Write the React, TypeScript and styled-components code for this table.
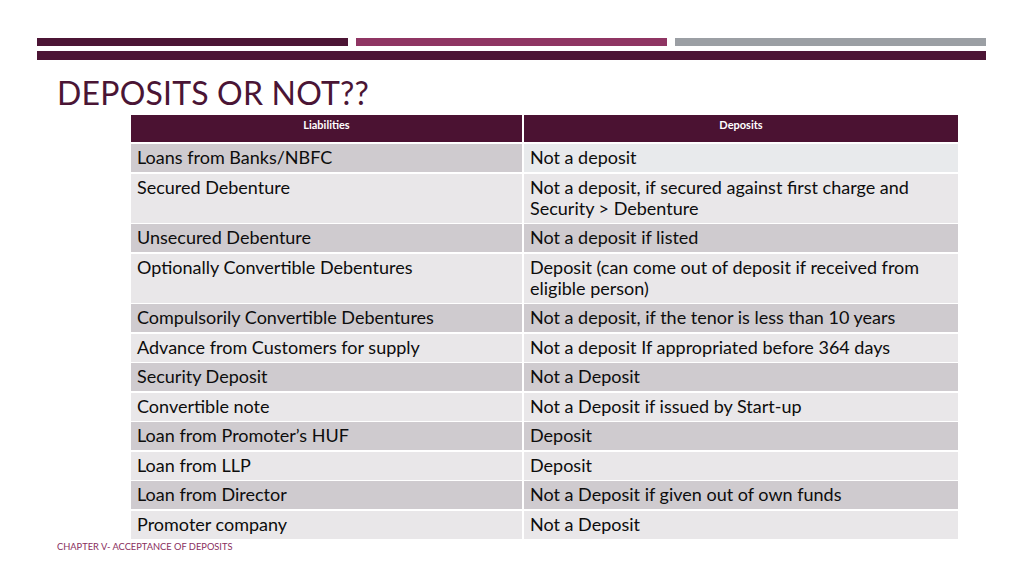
import React from "react";
import styled, {createGlobalStyle} from "styled-components";

const GlobalStyle = createGlobalStyle`
  html, body {
    margin: 0;
    padding: 0;
    background: #ffffff;
  }
  body {
    font-family: Lato, "Open Sans", sans-serif;
  }
`

interface IRow {
    liability: string
    deposit: string
}

const rows: IRow[] = [
    {liability: 'Loans from Banks/NBFC', deposit: 'Not a deposit'},
    {liability: 'Secured Debenture', deposit: 'Not a deposit, if secured against first charge and Security > Debenture'},
    {liability: 'Unsecured Debenture', deposit: 'Not a deposit if listed'},
    {liability: 'Optionally Convertible Debentures', deposit: 'Deposit (can come out of deposit if received from eligible person)'},
    {liability: 'Compulsorily Convertible Debentures', deposit: 'Not a deposit, if the tenor is less than 10 years'},
    {liability: 'Advance from Customers for supply', deposit: 'Not a deposit If appropriated before 364 days'},
    {liability: 'Security Deposit', deposit: 'Not a Deposit'},
    {liability: 'Convertible note', deposit: 'Not a Deposit if issued by Start-up'},
    {liability: 'Loan from Promoter’s HUF', deposit: 'Deposit'},
    {liability: 'Loan from LLP', deposit: 'Deposit'},
    {liability: 'Loan from Director', deposit: 'Not a Deposit if given out of own funds'},
    {liability: 'Promoter company', deposit: 'Not a Deposit'},
]

const cellTone = (index: number, column: 'left' | 'right') => {
    // the first deposit cell is lighter in the original slide
    if (index === 0 && column === 'right') return 'first'
    return index % 2 === 0 ? 'dark' : 'light'
}

const App: React.FC = () => {
    return (
        <>
            <GlobalStyle/>
            <Slide>
                <TopBars>
                    <Segment $color='#4c1535'/>
                    <Segment $color='#8f3563'/>
                    <Segment $color='#9b9fa4'/>
                </TopBars>
                <Rule/>
                <Title>DEPOSITS OR NOT??</Title>
                <Table>
                    <HeadCell>Liabilities</HeadCell>
                    <HeadCell>Deposits</HeadCell>
                    {rows.map((row, index) => (
                        <React.Fragment key={row.liability}>
                            <Cell $tone={cellTone(index, 'left')}>{row.liability}</Cell>
                            <Cell $tone={cellTone(index, 'right')}>{row.deposit}</Cell>
                        </React.Fragment>
                    ))}
                </Table>
                <Footer>CHAPTER V- ACCEPTANCE OF DEPOSITS</Footer>
            </Slide>
        </>
    )
}

export default App

const Slide = styled.div`
  width: 1024px;
  height: 576px;
  box-sizing: border-box;
  padding: 38px 38px 0 37px;
  display: flex;
  flex-direction: column;
  overflow: hidden;
  background: #ffffff;
`
const TopBars = styled.div`
  width: 949px;
  display: flex;
  gap: 8px;
`
const Segment = styled.div<{ $color: string }>`
  flex: 1;
  height: 8px;
  background: ${p => p.$color};
`
const Rule = styled.div`
  width: 949px;
  height: 9px;
  margin-top: 5px;
  background: #4c1535;
`
const Title = styled.h1`
  margin: 17px 0 0 20px;
  font-family: Lato, "Open Sans", sans-serif;
  font-weight: 400;
  font-size: 32px;
  line-height: 32px;
  color: #4a1535;
  letter-spacing: 0.2px;
`
const Table = styled.div`
  margin: 6px 0 0 94px;
  width: 827px;
  display: grid;
  grid-template-columns: 391px 434px;
  column-gap: 2px;
  row-gap: 1.5px;
`
const HeadCell = styled.div`
  height: 27px;
  margin-bottom: 0.5px;
  box-sizing: border-box;
  padding-top: 3px;
  background: #4b1232;
  color: #ffffff;
  font-weight: 700;
  font-size: 11px;
  line-height: 13px;
  text-align: center;
`
const Cell = styled.div<{ $tone: 'dark' | 'light' | 'first' }>`
  box-sizing: border-box;
  padding: 3px 20px 4px 6px;
  font-size: 18px;
  line-height: 21px;
  color: #0d0d0d;
  background: ${p => p.$tone === 'dark' ? '#cfcbcf' : p.$tone === 'first' ? '#e8eaec' : '#e9e7e9'};
`
const Footer = styled.div`
  margin: 2px 0 0 20px;
  font-size: 9.3px;
  line-height: 12px;
  color: #8a2f5e;
  text-transform: uppercase;
`
